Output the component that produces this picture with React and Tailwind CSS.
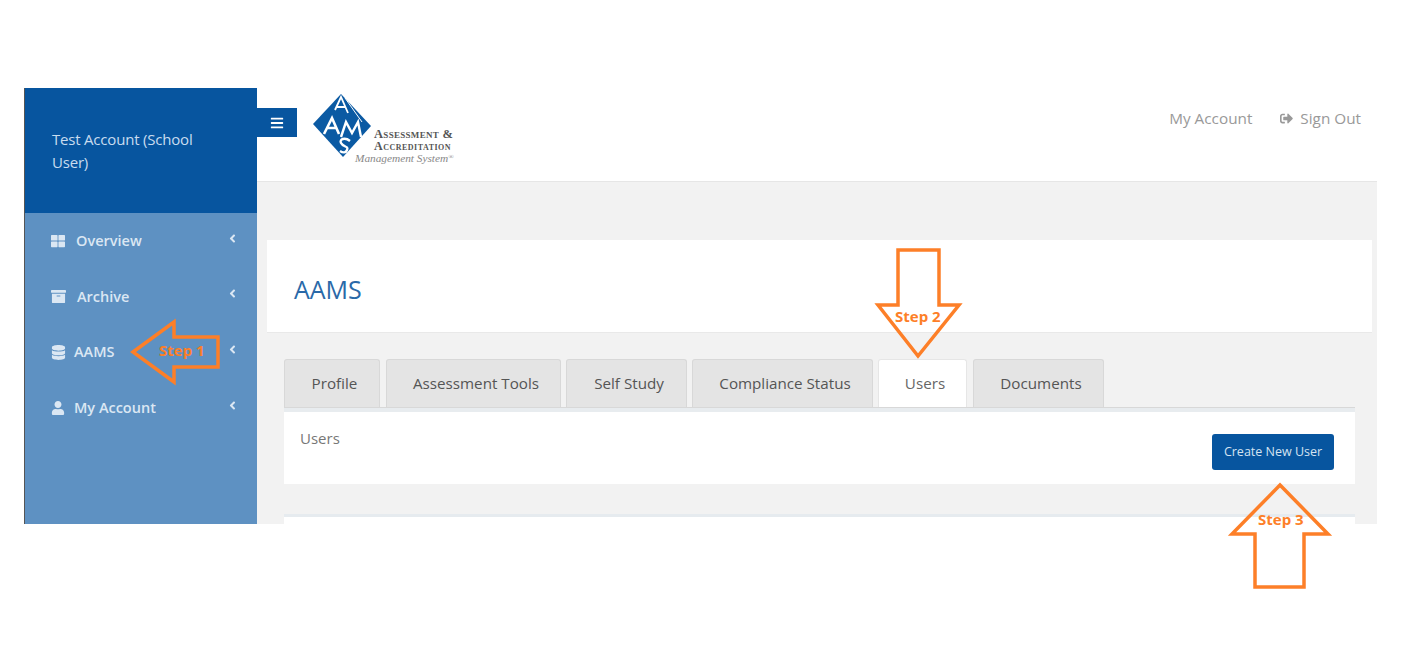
import { FaThLarge, FaArchive, FaDatabase, FaUser, FaBars, FaAngleLeft, FaSignOutAlt } from "react-icons/fa";

const menu = [
  { label: "Overview", Icon: FaThLarge, gap: "gap-[11px]", size: 14 },
  { label: "Archive", Icon: FaArchive, gap: "gap-[11px]", size: 15 },
  { label: "AAMS", Icon: FaDatabase, gap: "gap-[8px]", size: 15 },
  { label: "My Account", Icon: FaUser, gap: "gap-[9px]", size: 14 },
];

const tabs = [
  { label: "Profile", width: "w-[96px]" },
  { label: "Assessment Tools", width: "w-[175px] ml-[6px]" },
  { label: "Self Study", width: "w-[121px] ml-[5px]" },
  { label: "Compliance Status", width: "w-[181px] ml-[5px]" },
  { label: "Users", width: "w-[89px] ml-[5px]", active: true },
  { label: "Documents", width: "w-[131px] ml-[6px]" },
];

function LogoMark() {
  return (
    <svg width="60" height="68" viewBox="0 0 60 68" className="shrink-0">
      <polygon points="29,1 59,33 31,64 1,31" fill="#0b5aa3" />
      <path d="M23 17 L29 4 L36 20 M25 14 H33" fill="none" stroke="#ffffff" strokeWidth="1.8" />
      <path d="M33 5 L50 29" fill="none" stroke="#ffffff" strokeWidth="1" />
      <path d="M12 41 L20 25 L27 41 M15 35 H25" fill="none" stroke="#ffffff" strokeWidth="2.6" />
      <path d="M29 44 L34 29 L40 40 L46 29 L49 44" fill="none" stroke="#ffffff" strokeWidth="2.4" />
      <path d="M38 48 C33 44 27 46 29 50 C31 54 37 53 35 57 C34 60 31 60 28 58" fill="none" stroke="#ffffff" strokeWidth="2.4" />
    </svg>
  );
}

function Logo() {
  return (
    <div className="flex ml-[15px] mt-[5px]">
      <LogoMark />
      <div className="-ml-[17px] mt-[35px] font-['Liberation_Serif',serif] text-[#555] leading-[12px]">
        <p className="pl-[19px] text-[12.5px] font-bold [font-variant:small-caps] tracking-[0.3px]">Assessment &amp;</p>
        <p className="pl-[19px] text-[12px] font-bold [font-variant:small-caps] tracking-[0.5px]">Accreditation</p>
        <p className="text-[11.3px] italic text-[#888]">Management System<sup className="text-[7px]">®</sup></p>
      </div>
    </div>
  );
}

function Sidebar() {
  return (
    <aside className="w-[233px] shrink-0 bg-[#5e91c2] border-l border-[#555]">
      <div className="h-[125px] bg-[#07559f] pl-[27px] pr-[40px] pt-[40px] text-[15px] leading-[23px] tracking-[-0.2px] text-[#c9dcef]">
        Test Account (School User)
      </div>
      <nav>
        {menu.map(({ label, Icon, gap, size }) => (
          <div key={label} className="h-[55.67px] flex items-center justify-between pl-[26px] pr-[18px] text-[#dbe7f3]">
            <span className={`flex items-center ${gap} text-[14.5px] font-semibold`}>
              <Icon size={size} />
              {label}
            </span>
            <FaAngleLeft size={13} className="-mt-[5px]" />
          </div>
        ))}
      </nav>
    </aside>
  );
}

function Tabs() {
  return (
    <div className="flex h-[48px]">
      {tabs.map((tab) => (
        <div
          key={tab.label}
          className={`${tab.width} h-[48px] flex items-center justify-center pl-[5px] rounded-t-[3px] border border-b-0 text-[15.2px] ${
            tab.active ? "bg-white border-[#e6e6e6] text-[#666]" : "bg-[#e4e4e4] border-[#d8d8d8] text-[#555]"
          }`}
        >
          {tab.label}
        </div>
      ))}
    </div>
  );
}

function Main() {
  return (
    <main className="flex-1 flex flex-col bg-[#f2f2f2]">
      <header className="h-[94px] shrink-0 bg-white border-b border-[#e6e6e6] flex items-start justify-between">
        <div className="flex items-start">
          <div className="mt-[20px] w-[40px] h-[29px] bg-[#07559f] flex items-center justify-center text-white">
            <FaBars size={14} />
          </div>
          <Logo />
        </div>
        <div className="flex items-center gap-[28px] mt-[19px] mr-[16px] text-[15.3px] font-medium text-[#999]">
          <span>My Account</span>
          <span className="flex items-center gap-[7px]">
            <FaSignOutAlt size={13} />
            Sign Out
          </span>
        </div>
      </header>
      <section className="ml-[10px] mr-[5px] mt-[58px] h-[93px] bg-white border-b border-[#e9e9e9] flex items-center pl-[27px] pt-[8px] text-[25px] text-[#2a69a8]">
        AAMS
      </section>
      <div className="ml-[27px] mr-[22px] mt-[26px]">
        <Tabs />
        <div className="h-[5px] bg-[#e8ecef] border-t border-[#d8d8d8]"></div>
        <div className="h-[72px] bg-white flex justify-between pl-[16px] pr-[21px] pt-[16px]">
          <span className="text-[15px] leading-[20px] text-[#777]">Users</span>
          <button className="mt-[6px] w-[122px] h-[36px] rounded-[3px] bg-[#07559f] text-[12.5px] text-[#d5e3f1]">
            Create New User
          </button>
        </div>
        <div className="mt-[30px] h-[3px] bg-[#e6ebef]"></div>
        <div className="h-[7px] bg-white"></div>
      </div>
    </main>
  );
}

function StepLabel({ className, children }) {
  return <span className={`absolute text-[15px] leading-[18px] font-bold text-[#fd7f28] ${className}`}>{children}</span>;
}

export default function App() {
  return (
    <div className="relative w-[1416px] h-[672px] bg-white overflow-hidden font-['Open_Sans',sans-serif]">
      <div className="absolute left-[24px] top-[88px] w-[1353px] h-[436px] flex overflow-hidden">
        <Sidebar />
        <Main />
      </div>
      <svg width="1416" height="672" className="absolute left-0 top-0" fill="none" stroke="#fd7f28" strokeWidth="3.5">
        <polygon points="133,352 174,322 174,337 218,337 218,367 174,367 174,382" />
        <polygon points="898,250 939,250 939,305 959,305 918,356 878,305 898,305" />
        <polygon points="1280,485 1328,534 1304,534 1304,587 1255,587 1255,534 1232,534" />
      </svg>
      <StepLabel className="left-[159px] top-[341px]">Step 1</StepLabel>
      <StepLabel className="left-[895px] top-[307px]">Step 2</StepLabel>
      <StepLabel className="left-[1258px] top-[510px]">Step 3</StepLabel>
    </div>
  );
}
